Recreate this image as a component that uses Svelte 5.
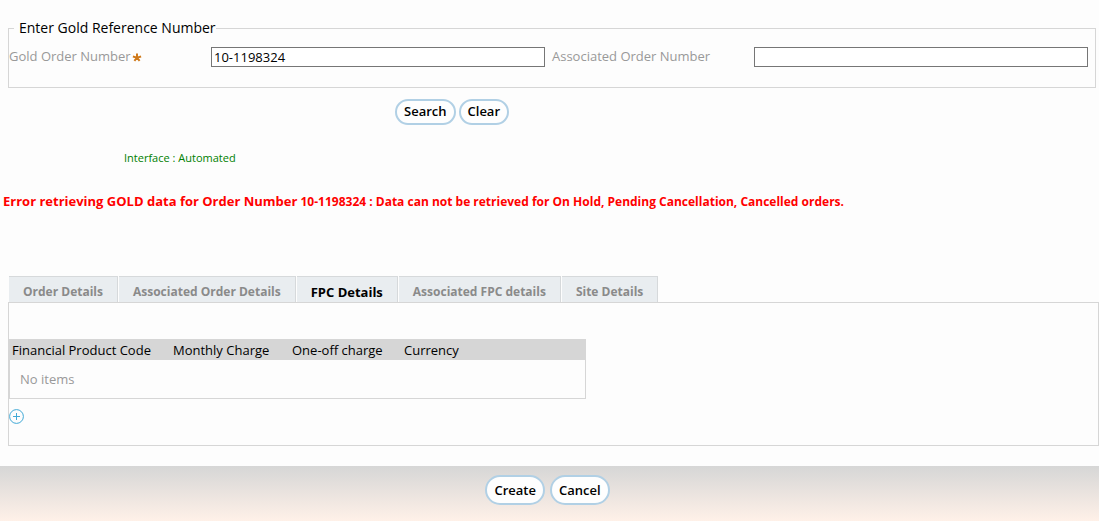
<script>
  let goldOrder = $state('10-1198324');
  let associatedOrder = $state('');
  let active = $state(2);

  const tabs = [
    'Order Details',
    'Associated Order Details',
    'FPC Details',
    'Associated FPC details',
    'Site Details'
  ];

  function clear() {
    goldOrder = '';
    associatedOrder = '';
  }
</script>

<main>
  <form onsubmit={(e) => e.preventDefault()}>
    <fieldset>
      <legend>Enter Gold Reference Number</legend>
      <div class="fields">
        <div class="field">
          <label for="gold">Gold Order Number<svg class="required" width="10" height="9" viewBox="0 0 10 9" aria-hidden="true"><path d="M5 4.6V0.6M5 4.6L0.9 3.5M5 4.6L9.1 3.5M5 4.6L2.4 7.8M5 4.6L7.6 7.8" /></svg></label>
          <input id="gold" type="text" bind:value={goldOrder} />
        </div>
        <div class="field">
          <label for="associated">Associated Order Number</label>
          <input id="associated" type="text" bind:value={associatedOrder} />
        </div>
      </div>
    </fieldset>
    <div class="search-actions">
      <button class="pill" type="submit">Search</button>
      <button class="pill" type="button" onclick={clear}>Clear</button>
    </div>
  </form>

  <p class="interface">Interface : Automated</p>
  <p class="error" role="alert"><span class="lead">Error retrieving GOLD data for Order Number</span> 10-1198324 : Data can not be retrieved for On Hold, Pending Cancellation, Cancelled orders.</p>

  <div class="details">
    <div class="tabs" role="tablist">
      {#each tabs as tab, i}
        <button class="tab" class:active={i === active} type="button" role="tab" aria-selected={i === active} onclick={() => (active = i)}>{tab}</button>
      {/each}
    </div>
    <section class="panel">
      <table>
        <colgroup>
          <col class="code" />
          <col class="monthly" />
          <col class="oneoff" />
          <col />
        </colgroup>
        <thead>
          <tr>
            <th>Financial Product Code</th>
            <th>Monthly Charge</th>
            <th>One-off charge</th>
            <th>Currency</th>
          </tr>
        </thead>
        <tbody>
          <tr><td colspan="4">No items</td></tr>
        </tbody>
      </table>
      <button class="add" type="button" aria-label="Add item">
        <svg width="15" height="15" viewBox="0 0 15 15" aria-hidden="true">
          <circle cx="7.5" cy="7.5" r="6.9" />
          <path d="M7.5 4V11M4 7.5H11" />
        </svg>
      </button>
    </section>
  </div>

  <footer>
    <button class="pill tall" type="button">Create</button>
    <button class="pill tall" type="button">Cancel</button>
  </footer>
</main>

<style>
  :global(body) {
    margin: 0;
    background: #fdfdfd;
  }

  main {
    font-family: 'Open Sans', sans-serif;
    font-size: 13px;
    line-height: 18px;
    color: #000;
    padding-top: 18px;
  }

  button,
  input {
    box-sizing: border-box;
    font-family: inherit;
    font-size: 13px;
    margin: 0;
  }

  fieldset {
    margin: 0 3px 0 8px;
    padding: 0 7px 20px 0;
    border: 1px solid #d6d6d6;
    min-width: 0;
  }

  legend {
    margin-left: 5px;
    padding: 0 0 0 5px;
    font-size: 14px;
    line-height: 20px;
  }

  .fields {
    display: grid;
    grid-template-columns: 1fr 1fr;
    gap: 7px;
    padding-top: 9px;
  }

  .field {
    display: flex;
    align-items: flex-start;
  }

  label {
    flex: 0 0 202px;
    color: #999;
  }

  .required {
    margin-left: 1px;
    vertical-align: -1px;
    fill: none;
    stroke: #cf7a1c;
    stroke-width: 2;
  }

  input {
    flex: 1;
    min-width: 0;
    height: 20px;
    padding: 0 2px;
    border: 1px solid #767676;
    border-radius: 0;
    background: #fff;
    color: #000;
  }

  .search-actions {
    display: flex;
    gap: 3px;
    padding: 11px 0 0 395px;
  }

  .pill {
    height: 26px;
    padding: 0 7px 2px;
    border: 2px solid #b1d0e5;
    border-radius: 15px;
    background: #fefefe;
    color: #000;
    font-weight: 600;
    line-height: 18px;
  }

  .pill.tall {
    height: 30px;
    padding-bottom: 0;
  }

  p {
    margin: 0;
  }

  .interface {
    padding: 24px 0 0 124px;
    color: #008000;
    font-size: 11px;
  }

  .error {
    padding: 25px 0 0 3px;
    color: #f00;
    font-size: 12px;
    font-weight: 700;
  }

  .lead {
    font-size: 13px;
  }

  .details {
    margin: 65px 0 20px 8px;
  }

  .tabs {
    display: flex;
    gap: 1px;
    padding-left: 1px;
  }

  .tab {
    height: 26px;
    padding: 4px 14px 0;
    border: 0 solid #d6d9db;
    border-width: 1px 1px 0 0;
    background: #e9edf0;
    color: #8a8a8a;
    font-size: 12px;
    font-weight: 700;
    line-height: 18px;
  }

  .tab.active {
    color: #000;
    font-size: 13px;
  }

  .panel {
    padding: 36px 0 21px;
    border: 1px solid #d6d6d6;
  }

  table {
    width: 53%;
    table-layout: fixed;
    border-spacing: 0;
  }

  .code {
    width: 161px;
  }

  .monthly {
    width: 119px;
  }

  .oneoff {
    width: 112px;
  }

  th {
    padding: 2px 0 1px 3px;
    background: #d6d6d6;
    font-weight: 400;
    text-align: left;
    white-space: nowrap;
  }

  td {
    padding: 10px;
    border: 1px solid #d6d6d6;
    border-top: 0;
    color: #999;
  }

  .add {
    display: block;
    margin-top: 10px;
    padding: 0;
    border: 0;
    background: none;
  }

  .add svg {
    display: block;
    fill: none;
    stroke: #41a9d6;
  }

  footer {
    display: flex;
    justify-content: center;
    gap: 5px;
    padding: 9px 4px 16px 0;
    background: linear-gradient(#d6d6d6, #fff1e8);
  }
</style>
